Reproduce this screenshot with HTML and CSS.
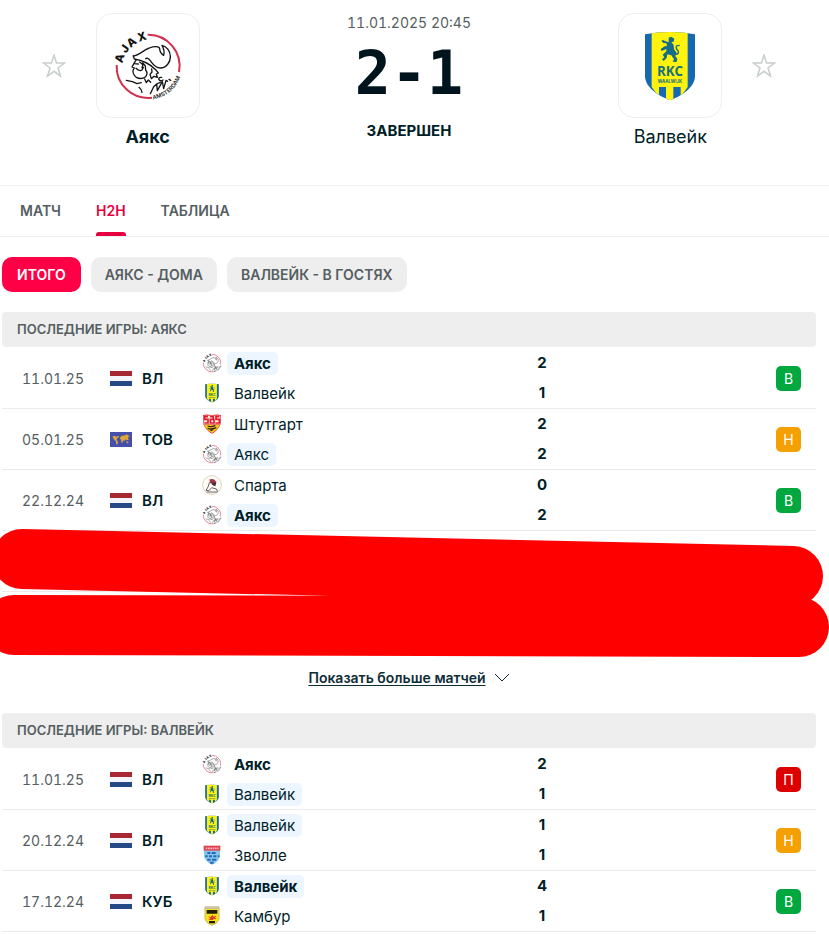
FILE: index.html
```
<!DOCTYPE html>
<html lang="ru">
<head>
  <meta charset="UTF-8">
  <meta name="viewport" content="width=device-width, initial-scale=1.0">
  <title>Аякс - Валвейк</title>
  <link rel="stylesheet" href="styles.css">
</head>
<body>

  <header class="match-header">
    <div class="team">
      <div class="team-row">
        <button class="star-btn" type="button" aria-label="Добавить Аякс в избранное">
          <svg viewBox="0 0 24 24"><path d="M12 1 L14.5 9 H22.5 L16 14 L18.5 22 L12 17.3 L5.5 22 L8 14 L1.5 9 H9.5 Z"/></svg>
        </button>
        <div class="team-logo">
          <svg viewBox="0 0 216 216">
            <path id="ajax-arc" d="M123 208 A101 101 0 0 0 210 110" fill="none"/>
            <g id="ajax">
              <path d="M107 14 A94 94 0 0 1 201 126 M120 203 A94 94 0 0 1 14 105" fill="none" stroke="#d2304f" stroke-width="6"/>
              <g font-family="Inter, sans-serif" font-weight="800" font-size="34" text-anchor="middle" fill="#111">
                <text transform="translate(34 88) rotate(-74)">A</text>
                <text transform="translate(48 63) rotate(-55)">J</text>
                <text transform="translate(66 46) rotate(-38)">A</text>
                <text transform="translate(93 31) rotate(-18)">X</text>
              </g>
              <text font-family="Inter, sans-serif" font-weight="600" font-size="17" fill="#222"><textPath href="#ajax-arc">AMSTERDAM</textPath></text>
              <g fill="none" stroke="#151515" stroke-width="4" stroke-linecap="round" stroke-linejoin="round">
                <path d="M64 78 C82 76 94 60 112 54 C127 48 142 48 143 56 C143 66 149 72 155 76 C158 66 155 55 150 46 C164 49 174 62 175 78 C176 96 163 114 145 114 C128 113 123 102 115 92 C110 85 104 83 101 86"/>
                <path d="M64 78 L67 87 C93 91 116 104 131 119 L139 129 L133 132 L136 142 L126 139 L118 146 L114 133 L120 126 L119 117"/>
                <path d="M73 89 L66 100 L60 111 L67 114 L63 121 Q62 134 73 142 Q88 150 101 140 Q109 129 101 121 M68 101 L79 102 M83 96 L93 104 L90 113 M72 115 Q82 125 90 120 L94 112 M92 98 L100 108 L101 121"/>
                <path d="M43 151 L61 155 L75 161 L88 158 M81 172 Q89 178 90 187 M98 147 L103 158 L109 150 L116 157"/>
                <path d="M115 191 L125 170 L134 162 L136 182 L151 155 L155 176 L162 151 L167 154 M149 142 Q138 141 141 149 Q144 155 153 150 M134 162 L145 157 M171 148 L176 151"/>
              </g>
            </g>
          </svg>
        </div>
        <span class="star-space"></span>
      </div>
      <div class="team-name winner">Аякс</div>
    </div>

    <div class="result">
      <div class="result-date">11.01.2025 20:45</div>
      <div class="result-score">2-1</div>
      <div class="result-status">ЗАВЕРШЕН</div>
    </div>

    <div class="team">
      <div class="team-row">
        <span class="star-space"></span>
        <div class="team-logo">
          <svg viewBox="0 0 216 216">
            <clipPath id="rkc-shield"><path d="M33 13 Q108 -1 183 13 V138 C183 174 140 198 108 211 C76 198 33 174 33 138 Z"/></clipPath>
            <g id="rkc">
              <g clip-path="url(#rkc-shield)">
                <path d="M33 0 H183 V216 H33 Z" fill="#1768b3"/>
                <path d="M53 0 H161 V171 L140 200 V171 H118 V216 H96 V171 H75 V200 L53 171 Z" fill="#fff20c"/>
              </g>
              <path d="M104 23 L112 20 L121 26 L119 35 L112 36 L119 45 L120 58 L128 68 L124 78 L130 87 L128 96 L116 95 L120 88 L112 76 L100 73 L98 84 L89 93 L84 88 L91 82 L86 74 L97 64 L97 57 L83 63 L80 57 L92 49 L99 48 L97 40 L88 39 L82 32 L87 30 L95 34 L104 37 Z" fill="#166b88"/>
              <path d="M124 73 Q137 72 132 62 Q123 54 129 47 L137 46" fill="none" stroke="#166b88" stroke-width="4"/>
              <g font-weight="700" text-anchor="middle" fill="#16707d">
                <text x="108" y="138" font-family="Open Sans, sans-serif" font-size="40">RKC</text>
                <text x="108" y="158" font-family="Inter, sans-serif" font-size="13">WAALWIJK</text>
              </g>
            </g>
          </svg>
        </div>
        <button class="star-btn" type="button" aria-label="Добавить Валвейк в избранное">
          <svg viewBox="0 0 24 24"><path d="M12 1 L14.5 9 H22.5 L16 14 L18.5 22 L12 17.3 L5.5 22 L8 14 L1.5 9 H9.5 Z"/></svg>
        </button>
      </div>
      <div class="team-name">Валвейк</div>
    </div>
  </header>

  <nav class="tabs">
    <a href="#match">МАТЧ</a>
    <a href="#h2h" class="active">H2H</a>
    <a href="#table">ТАБЛИЦА</a>
  </nav>

  <main class="content">
    <div class="filters">
      <button type="button" class="filter active">ИТОГО</button>
      <button type="button" class="filter">АЯКС - ДОМА</button>
      <button type="button" class="filter">ВАЛВЕЙК - В ГОСТЯХ</button>
    </div>

    <section>
      <h2>ПОСЛЕДНИЕ ИГРЫ: АЯКС</h2>
      <div class="games-wrap">
        <table class="games">
          <tr>
            <td class="date">11.01.25</td>
            <td class="league"><div><svg viewBox="0 0 22 15"><g id="nl"><path d="M0 0 H22 V5 H0 Z" fill="#a72832"/><path d="M0 5 H22 V10 H0 Z" fill="#f4f5fa"/><path d="M0 10 H22 V15 H0 Z" fill="#244984"/></g></svg>ВЛ</div></td>
            <td class="teams">
              <div><svg viewBox="0 0 216 216"><use href="#ajax"/></svg><span class="name bold marked">Аякс</span></div>
              <div><svg viewBox="0 0 216 216"><use href="#rkc"/></svg><span class="name">Валвейк</span></div>
            </td>
            <td class="score"><div>2</div><div>1</div></td>
            <td class="outcome"><span class="badge win">В</span></td>
          </tr>
          <tr>
            <td class="date">05.01.25</td>
            <td class="league"><div><svg viewBox="0 0 66 45"><path d="M0 0 H66 V45 H0 Z" fill="#4450ab"/><path d="M7 14 L13 11 L19 14 L25 11 L28 15 L22 18 L19 24 L24 28 L22 38 L18 36 L18 28 L13 24 Z M31 15 L36 11 L46 10 L50 7 L59 13 L54 16 L56 23 L50 25 L46 22 L43 28 L39 25 L37 34 L33 29 L34 23 L30 21 Z M49 28 L56 29 L54 34 L50 33 Z" fill="#dfa535"/></svg>ТОВ</div></td>
            <td class="teams">
              <div>
                <svg viewBox="0 0 60 60">
                  <path d="M3 3 Q17 0 30 4 Q43 0 57 3 V27 Q51 48 30 59 Q9 48 3 27 Z" fill="#e8222f"/>
                  <path d="M5 5 H55 V31 H5 Z" fill="#fff0ec"/>
                  <path d="M18 8 H8 V16 H18 V27 H7 M24 8 H34 V16 H25 V27 H36 V16 M52 8 H42 V16 H52 V27 H40" fill="none" stroke="#e01c2b" stroke-width="5"/>
                  <path d="M6 32 H54 Q48 47 30 57 Q12 47 6 32 Z" fill="#f5c51d"/>
                  <path d="M17 36 Q28 41 40 34 M17 43 Q30 47 43 41 M25 50 L34 46" fill="none" stroke="#352719" stroke-width="4"/>
                </svg>
                <span class="name">Штутгарт</span>
              </div>
              <div><svg viewBox="0 0 216 216"><use href="#ajax"/></svg><span class="name marked">Аякс</span></div>
            </td>
            <td class="score"><div>2</div><div>2</div></td>
            <td class="outcome"><span class="badge draw">Н</span></td>
          </tr>
          <tr>
            <td class="date">22.12.24</td>
            <td class="league"><div><svg viewBox="0 0 22 15"><use href="#nl"/></svg>ВЛ</div></td>
            <td class="teams">
              <div>
                <svg viewBox="0 0 60 60">
                  <circle cx="30" cy="30" r="28" fill="#fffdf8" stroke="#ded2b9" stroke-width="3"/>
                  <path d="M21 14 Q38 8 43 23 L37 32 L29 25 L21 25 L24 18 Z" fill="#a73545"/>
                  <path d="M27 20 L34 24 L43 22 L40 34 L31 30 Z" fill="#3d3136"/>
                  <path d="M22 24 L18 36 L12 46 L21 47 L29 38 L43 42 L47 50 M14 51 H46" fill="none" stroke="#6b6266" stroke-width="3"/>
                </svg>
                <span class="name">Спарта</span>
              </div>
              <div><svg viewBox="0 0 216 216"><use href="#ajax"/></svg><span class="name bold marked">Аякс</span></div>
            </td>
            <td class="score"><div>0</div><div>2</div></td>
            <td class="outcome"><span class="badge win">В</span></td>
          </tr>
          <tr class="covered"><td colspan="5"></td></tr>
          <tr class="covered"><td colspan="5"></td></tr>
        </table>
        <svg class="marker" viewBox="0 0 829 130" preserveAspectRatio="none" aria-hidden="true">
          <path d="M22 31 L793 48 M14 97 L799 99"/>
        </svg>
      </div>
      <div class="more">
        <a href="#more">Показать больше матчей</a>
        <svg viewBox="0 0 16 10"><path d="M1 1 L8 8 L15 1"/></svg>
      </div>
    </section>

    <section>
      <h2>ПОСЛЕДНИЕ ИГРЫ: ВАЛВЕЙК</h2>
      <div class="games-wrap">
        <table class="games">
          <tr>
            <td class="date">11.01.25</td>
            <td class="league"><div><svg viewBox="0 0 22 15"><use href="#nl"/></svg>ВЛ</div></td>
            <td class="teams">
              <div><svg viewBox="0 0 216 216"><use href="#ajax"/></svg><span class="name bold">Аякс</span></div>
              <div><svg viewBox="0 0 216 216"><use href="#rkc"/></svg><span class="name marked">Валвейк</span></div>
            </td>
            <td class="score"><div>2</div><div>1</div></td>
            <td class="outcome"><span class="badge loss">П</span></td>
          </tr>
          <tr>
            <td class="date">20.12.24</td>
            <td class="league"><div><svg viewBox="0 0 22 15"><use href="#nl"/></svg>ВЛ</div></td>
            <td class="teams">
              <div><svg viewBox="0 0 216 216"><use href="#rkc"/></svg><span class="name marked">Валвейк</span></div>
              <div>
                <svg viewBox="0 0 60 60">
                  <path d="M6 16 H54 V34 Q50 51 30 59 Q10 51 6 34 Z" fill="#83c6ee"/>
                  <path d="M5 2 H55 V17 H5 Z" fill="#df3e4d"/>
                  <path d="M11 10 H50" stroke="#f5b9c0" stroke-width="5" stroke-dasharray="5 2"/>
                  <path d="M16 24 H25 M29 24 H41 M10 34 H17 M21 34 H30 M34 34 H43 M47 34 H52 M16 44 H26 M30 44 H43 M24 53 H35" stroke="#2a68b5" stroke-width="6"/>
                </svg>
                <span class="name">Зволле</span>
              </div>
            </td>
            <td class="score"><div>1</div><div>1</div></td>
            <td class="outcome"><span class="badge draw">Н</span></td>
          </tr>
          <tr>
            <td class="date">17.12.24</td>
            <td class="league"><div><svg viewBox="0 0 22 15"><use href="#nl"/></svg>КУБ</div></td>
            <td class="teams">
              <div><svg viewBox="0 0 216 216"><use href="#rkc"/></svg><span class="name bold marked">Валвейк</span></div>
              <div>
                <svg viewBox="0 0 60 60">
                  <path d="M9 3 H51 V40 Q46 54 30 58 Q14 54 9 40 Z" fill="#f8e414" stroke="#c7b879" stroke-width="3"/>
                  <path d="M8 2 H52 V9 H8 Z" fill="#cabfa9"/>
                  <path d="M14 12 H46 V23 H14 Z M21 45 H39 V52 H21 Z" fill="#201d0c"/>
                  <path d="M19 31 L26 34 L31 26 L35 32 L43 29 L39 35 L44 39 L35 38 L32 42 L18 41 L25 38 Z" fill="#e73122"/>
                </svg>
                <span class="name">Камбур</span>
              </div>
            </td>
            <td class="score"><div>4</div><div>1</div></td>
            <td class="outcome"><span class="badge win">В</span></td>
          </tr>
        </table>
      </div>
    </section>
  </main>

</body>
</html>
```
FILE: styles.css
```
* {
  box-sizing: border-box;
}

body {
  font-family: Inter, sans-serif;
  font-size: 15px;
  margin: 0;
  background-color: #fff;
  color: #001e28;
}

/* Header */
.match-header {
  display: grid;
  grid-template-columns: repeat(3, 1fr);
  padding: 13px 28px 36px 17px;
  border-bottom: 1px solid #eee;
  text-align: center;
}

.team-row {
  display: flex;
  justify-content: center;
  align-items: center;
  gap: 30px;
}

.star-btn,
.star-space {
  width: 24px;
  height: 24px;
  flex: none;
}

.star-btn {
  padding: 0;
  border: none;
  background: none;
  cursor: pointer;
}

.star-btn svg {
  display: block;
  width: 24px;
  height: 24px;
  fill: none;
  stroke: #c8cdcd;
  stroke-width: 1.5;
}

.team-logo {
  display: flex;
  justify-content: center;
  align-items: center;
  width: 104px;
  height: 105px;
  border: 1px solid #eee;
  border-radius: 16px;
}

.team-logo svg {
  width: 72px;
  height: 72px;
  overflow: visible;
}

.team-name {
  margin-top: 7px;
  font-size: 18px;
  line-height: 24px;
}

.team-name.winner {
  font-weight: 700;
}

.result-date {
  font-size: 14px;
  line-height: 20px;
  color: #555e61;
  font-variant-numeric: tabular-nums;
}

.result-score {
  margin-top: 12px;
  font-family: "DejaVu Sans Mono", monospace;
  font-size: 60px;
  font-weight: 700;
  line-height: 56px;
  color: #00141e;
}

.result-status {
  margin-top: 20px;
  font-size: 15px;
  font-weight: 700;
  line-height: 20px;
}

/* Tabs */
.tabs {
  display: flex;
  gap: 35px;
  padding: 0 20px;
  border-bottom: 1px solid #eee;
}

.tabs a {
  height: 50px;
  font-size: 14px;
  font-weight: 600;
  line-height: 50px;
  color: #555e61;
  text-decoration: none;
}

.tabs a.active {
  position: relative;
  color: #e6003f;
}

.tabs a.active::after {
  content: "";
  position: absolute;
  left: 0;
  right: 0;
  bottom: 0;
  height: 4px;
  border-radius: 3px 3px 0 0;
  background: #e6003f;
}

.content {
  padding: 20px 13px 0 2px;
}

.filters {
  display: flex;
  gap: 10px;
  margin-bottom: 20px;
}

.filter {
  height: 35px;
  padding: 0 14px;
  border: none;
  border-radius: 10px;
  background: #eee;
  color: #555e61;
  font-family: inherit;
  font-size: 14px;
  font-weight: 600;
  cursor: pointer;
}

.filter.active {
  padding: 0 15px;
  background: #ff0046;
  color: #fff;
}

h2 {
  margin: 0 0 1px;
  padding: 0 15px;
  border-radius: 4px;
  background: #eee;
  color: #555e61;
  font-size: 13px;
  font-weight: 600;
  line-height: 35px;
}

/* Games */
.games-wrap {
  position: relative;
}

.games {
  width: 100%;
  table-layout: fixed;
  border-spacing: 0;
}

.games td {
  height: 61px;
  padding: 0;
  border-bottom: 1px solid #eaebeb;
}

.games .date {
  width: 108px;
  padding-left: 20px;
  color: #555e61;
  font-size: 14px;
  font-variant-numeric: tabular-nums;
}

.games .league {
  width: 92px;
  font-weight: 600;
}

.league div {
  display: flex;
  align-items: center;
  gap: 10px;
}

.league svg {
  width: 22px;
  height: 15px;
}

.teams div {
  display: flex;
  align-items: center;
  gap: 5px;
  height: 30px;
}

.teams svg {
  width: 20px;
  height: 20px;
}

.name {
  padding: 0 7px;
  border-radius: 5px;
  line-height: 23px;
}

.name.bold {
  font-weight: 700;
}

.name.marked {
  background: #edf6ff;
}

.games .score {
  width: 40px;
  font-weight: 700;
  line-height: 30px;
  text-align: center;
}

.games .outcome {
  width: 254px;
  padding-right: 15px;
}

.badge {
  display: block;
  width: 25px;
  margin-left: auto;
  border-radius: 5px;
  color: #fff;
  font-size: 14px;
  line-height: 25px;
  text-align: center;
}

.badge.win {
  background: #00a83f;
}

.badge.draw {
  background: #f3a000;
}

.badge.loss {
  background: #dc0000;
}

/* Marker strokes over the last two rows */
.marker {
  position: absolute;
  left: -2px;
  bottom: -5px;
  width: calc(100% + 15px);
  height: 130px;
}

.marker path {
  fill: none;
  stroke: #f00;
  stroke-width: 60;
  stroke-linecap: round;
}

.more {
  display: flex;
  justify-content: center;
  align-items: center;
  gap: 8px;
  padding: 15px 0 25px;
}

.more a {
  color: #0f2d37;
  font-size: 14px;
  font-weight: 600;
  line-height: 20px;
  text-underline-offset: 2px;
}

.more svg {
  width: 16px;
  height: 10px;
  fill: none;
  stroke: #0f2d37;
}
```
